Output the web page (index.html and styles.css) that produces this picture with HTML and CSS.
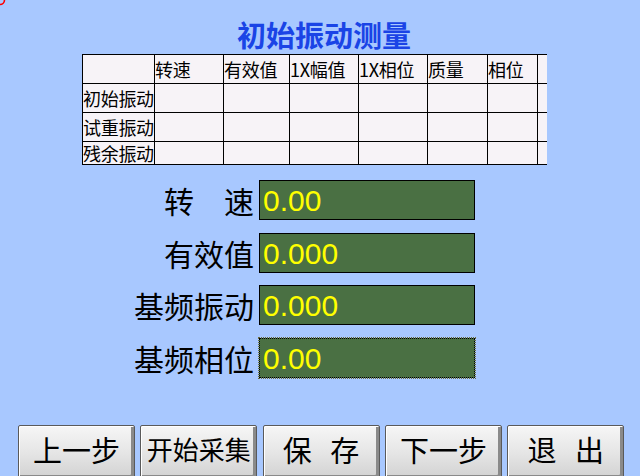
FILE: index.html
```html
<!DOCTYPE html>
<html lang="zh-CN">
<head>
<meta charset="utf-8">
<title>初始振动测量</title>
<link rel="stylesheet" href="styles.css">
</head>
<body>
<div class="screen">
  <svg class="corner-mark" width="8" height="8" viewBox="0 0 8 8"><path d="M4.5 0 A4.5 4.5 0 0 1 0 4.5" fill="none" stroke="#ff0000" stroke-width="1.6"/></svg>
  <h1 class="title">初始振动测量</h1>
  <div class="grid-wrap">
    <table class="data-grid">
      <colgroup>
        <col class="c0"><col class="c1"><col class="c2"><col class="c3"><col class="c4"><col class="c5"><col class="c6"><col class="c7">
      </colgroup>
      <tr><td></td><td>转速</td><td>有效值</td><td>1X幅值</td><td>1X相位</td><td>质量</td><td>相位</td><td></td></tr>
      <tr><td>初始振动</td><td></td><td></td><td></td><td></td><td></td><td></td><td></td></tr>
      <tr><td>试重振动</td><td></td><td></td><td></td><td></td><td></td><td></td><td></td></tr>
      <tr class="last"><td>残余振动</td><td></td><td></td><td></td><td></td><td></td><td></td><td></td></tr>
    </table>
  </div>
  <div class="fields">
    <div class="label">转　速</div><div class="value">0.00</div>
    <div class="label">有效值</div><div class="value">0.000</div>
    <div class="label">基频振动</div><div class="value">0.000</div>
    <div class="label">基频相位</div><div class="value focused">0.00</div>
  </div>
  <div class="buttons">
    <button class="btn">上一步</button>
    <button class="btn small">开始采集</button>
    <button class="btn spaced">保 存</button>
    <button class="btn">下一步</button>
    <button class="btn spaced">退 出</button>
  </div>
</div>
</body>
</html>
```
FILE: styles.css
```css
html, body {
  margin: 0;
  padding: 0;
}
body {
  width: 640px;
  height: 476px;
  overflow: hidden;
  background: #a8c8ff;
  font-family: "Noto Sans CJK SC", "Noto Sans", sans-serif;
}
.screen {
  position: relative;
  width: 640px;
  height: 476px;
  overflow: hidden;
}
.corner-mark {
  position: absolute;
  left: 0;
  top: 0;
}
.title {
  margin: 0;
  padding: 19px 0 0 8px;
  height: 54px;
  box-sizing: border-box;
  text-align: center;
  font-size: 29px;
  line-height: 30px;
  font-weight: bold;
  color: #1a44e6;
}
.grid-wrap {
  margin-left: 82px;
  width: 465px;
  height: 111px;
  overflow: hidden;
}
.data-grid {
  border-collapse: collapse;
  table-layout: fixed;
  width: 535px;
  background: #f7f3f7;
}
.data-grid col.c0 { width: 72px; }
.data-grid col.c1 { width: 69px; }
.data-grid col.c2 { width: 66px; }
.data-grid col.c3 { width: 69px; }
.data-grid col.c4 { width: 69px; }
.data-grid col.c5 { width: 60px; }
.data-grid col.c6 { width: 50px; }
.data-grid col.c7 { width: 80px; }
.data-grid td {
  border: 1px solid #000;
  height: 28px;
  padding: 0;
  font-size: 18px;
  line-height: 20px;
  white-space: nowrap;
  overflow: hidden;
  vertical-align: middle;
  color: #000;
  letter-spacing: -0.3px;
}
.data-grid tr.last td {
  height: 22px;
  border-bottom-width: 2px;
}
.fields {
  display: grid;
  grid-template-columns: 254px 216px;
  grid-auto-rows: 40px;
  column-gap: 5px;
  row-gap: 12.6px;
  margin-top: 15px;
}
.label {
  text-align: right;
  font-size: 30px;
  line-height: 40px;
  color: #000;
}
.value {
  background: #4a7043;
  border: 1px solid #000;
  box-sizing: border-box;
  color: #ffff00;
  font-family: "Liberation Sans", Arial, sans-serif;
  font-size: 30px;
  line-height: 40px;
  padding-left: 3px;
}
.value.focused {
  border: 1px dotted #000;
  outline: 1px dotted #6a6a40;
}
.buttons {
  display: flex;
  gap: 5.3px;
  padding-left: 18px;
  margin-top: 47px;
}
.btn {
  width: 117px;
  height: 54px;
  flex: none;
  box-sizing: border-box;
  border: 1px solid #5a5a5a;
  border-radius: 2px;
  background: linear-gradient(#f6f6f6, #e6e6e6 50%, #d2d2d2);
  box-shadow: inset 1px 1px 0 #ffffff, inset -3px -3px 0 #8a8a8a, inset -2px -2px 0 #6a6a6a;
  font-family: "Noto Sans CJK SC", sans-serif;
  font-size: 29px;
  line-height: 46px;
  padding: 0 0 6px 0;
  color: #000;
  text-align: center;
}
.btn.small {
  font-size: 26px;
}
.btn.spaced {
  word-spacing: 12px;
}
```
